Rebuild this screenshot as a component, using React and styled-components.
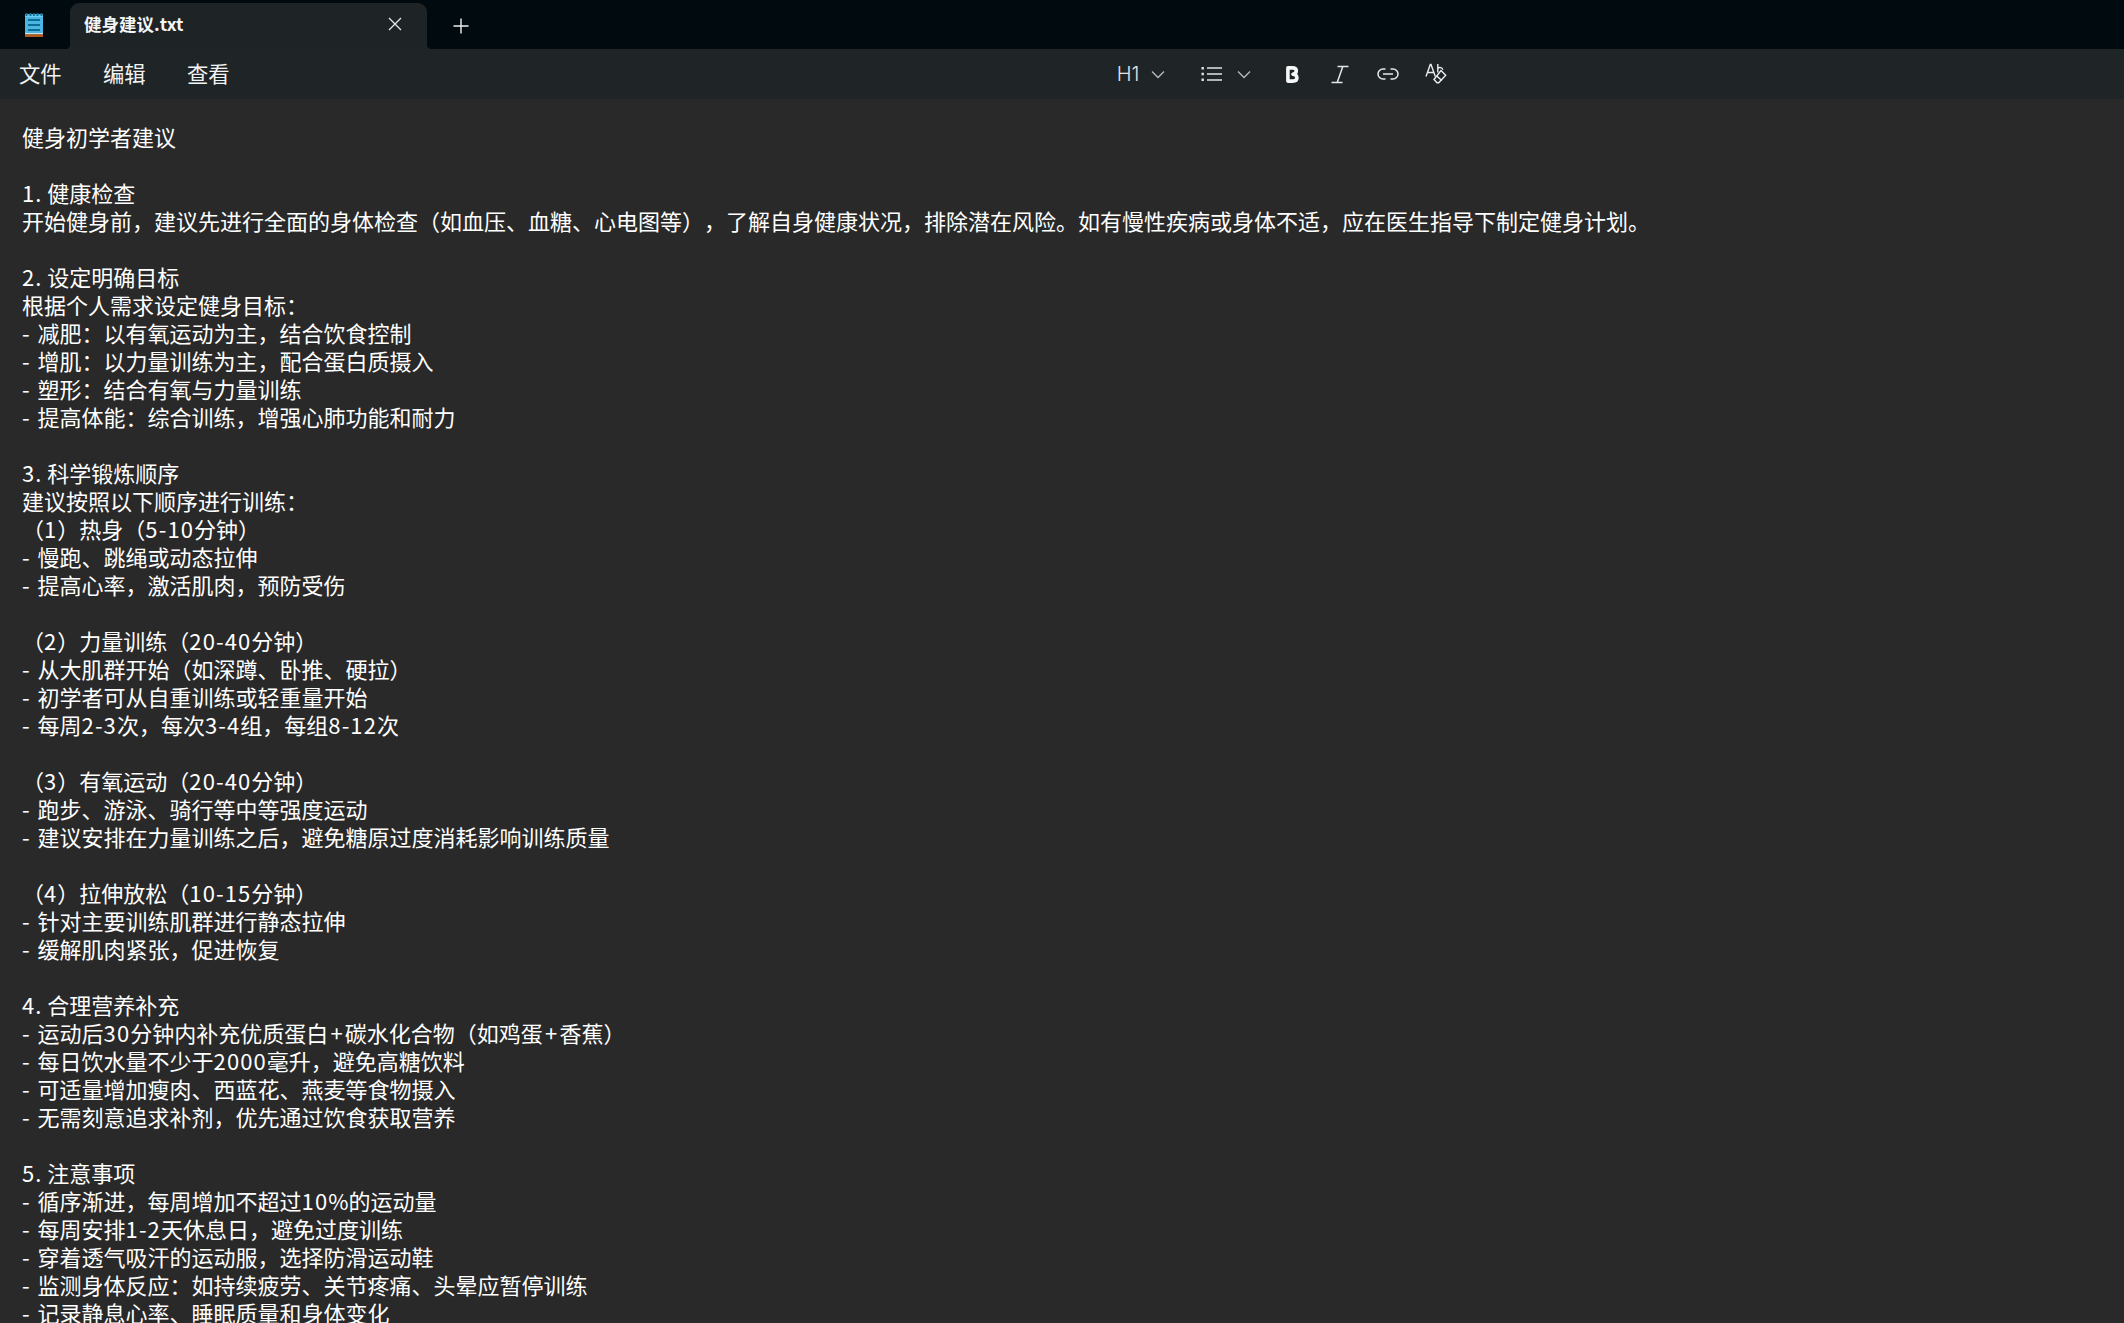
import React from "react";
import styled, { createGlobalStyle } from "styled-components";

const Global = createGlobalStyle`
  html, body { margin: 0; padding: 0; height: 100%; overflow: hidden; background: #292929; }
  #root { height: 100%; }
`;
const Shell = styled.div`
  height: 100vh; display: flex; flex-direction: column; overflow: hidden;
  font-family: "Noto Sans CJK SC", "Noto Sans", sans-serif; color: #fff;
  text-spacing-trim: space-all;
`;
const TitleBar = styled.div`
  height: 49px; flex: none; display: flex; align-items: flex-end; background: #010a0e;
`;
const AppIcon = styled.div`
  width: 70px; height: 49px; display: flex; align-items: center; justify-content: center; padding-right: 2px; box-sizing: border-box;
`;
const Tab = styled.div`
  position: relative; width: 357px; height: 46px; box-sizing: border-box; background: #1e2326; border-radius: 9px 9px 0 0;
  display: flex; align-items: center; justify-content: space-between; padding: 0 25px 5px 14px;
  &::before, &::after {
    content: ""; position: absolute; bottom: 0; width: 5px; height: 5px;
  }
  &::before { left: -5px; background: radial-gradient(circle at 0 0, transparent 5px, #1e2326 5.5px); }
  &::after { right: -5px; background: radial-gradient(circle at 100% 0, transparent 5px, #1e2326 5.5px); }
`;
const TabTitle = styled.span`
  font-size: 17.5px; font-weight: 700; line-height: 24px; color: #f4f5f5;
`;
const NewTab = styled.div`
  width: 68px; height: 49px; display: flex; align-items: center; justify-content: center; padding-top: 3px; box-sizing: border-box;
`;
const MenuBar = styled.div`
  height: 50px; flex: none; display: grid; grid-template-columns: 1080px auto; align-items: center;
  background: #1f2427; box-sizing: border-box; padding-left: 19px;
`;
const Menus = styled.div`display: flex; gap: 41.3px; margin-top: -2px;`;
const MenuItem = styled.span`font-size: 21.33px; line-height: 28px; color: #f2f3f3;`;
const Toolbar = styled.div`display: flex; align-items: center;`;
const Tool = styled.div`
  display: flex; align-items: center; justify-content: center; gap: ${p => p.$gap || 0}px; width: ${p => p.$w}px;
  color: #dfe1e2;
`;
const H1 = styled.span`font-family: "Inter", "Noto Sans", sans-serif; font-size: 20px; font-weight: 300; line-height: 24px; color: #e4e5e6;`;
const Editor = styled.main`
  flex: 1; min-height: 0; overflow: hidden; background: #292929; padding: 23px 0 0 22px;
`;
const Line = styled.div`
  height: 28px; line-height: 28px; font-size: 22px; white-space: pre; color: #fff; word-spacing: 1px;
`;
const Dash = styled.span`letter-spacing: 1px;`;
const Digits = styled.span`letter-spacing: 1.1px;`;
const PlusSign = styled.span`margin: 0 2.2px;`;

const text = `健身初学者建议

1. 健康检查
开始健身前，建议先进行全面的身体检查（如血压、血糖、心电图等），了解自身健康状况，排除潜在风险。如有慢性疾病或身体不适，应在医生指导下制定健身计划。

2. 设定明确目标
根据个人需求设定健身目标：
- 减肥：以有氧运动为主，结合饮食控制
- 增肌：以力量训练为主，配合蛋白质摄入
- 塑形：结合有氧与力量训练
- 提高体能：综合训练，增强心肺功能和耐力

3. 科学锻炼顺序
建议按照以下顺序进行训练：
（1）热身（5-10分钟）
- 慢跑、跳绳或动态拉伸
- 提高心率，激活肌肉，预防受伤

（2）力量训练（20-40分钟）
- 从大肌群开始（如深蹲、卧推、硬拉）
- 初学者可从自重训练或轻重量开始
- 每周2-3次，每次3-4组，每组8-12次

（3）有氧运动（20-40分钟）
- 跑步、游泳、骑行等中等强度运动
- 建议安排在力量训练之后，避免糖原过度消耗影响训练质量

（4）拉伸放松（10-15分钟）
- 针对主要训练肌群进行静态拉伸
- 缓解肌肉紧张，促进恢复

4. 合理营养补充
- 运动后30分钟内补充优质蛋白+碳水化合物（如鸡蛋+香蕉）
- 每日饮水量不少于2000毫升，避免高糖饮料
- 可适量增加瘦肉、西蓝花、燕麦等食物摄入
- 无需刻意追求补剂，优先通过饮食获取营养

5. 注意事项
- 循序渐进，每周增加不超过10%的运动量
- 每周安排1-2天休息日，避免过度训练
- 穿着透气吸汗的运动服，选择防滑运动鞋
- 监测身体反应：如持续疲劳、关节疼痛、头晕应暂停训练
- 记录静息心率、睡眠质量和身体变化`.split("\n");

const NotepadIcon = () => (
  <svg width="20" height="25" viewBox="0 0 20 25">
    <rect x="1" y="2" width="18" height="20.5" fill="#4cb6e2" />
    <path d="M1 3.5h18v1.5H1z" fill="#6ccdf0" />
    <path d="M2.5 1v3M6.5 1v3M10 1v3M13.5 1v3M17.5 1v3" stroke="#136f8e" strokeWidth="1.7" />
    <path d="M1 21.2h18v1.2H1z" fill="#efe9df" />
    <path d="M1 22.4h18V25H1z" fill="#b4581c" />
    <path d="M4 8h12M4 13h12M4 18h12" stroke="#0f6c94" strokeWidth="2" />
  </svg>
);
const CloseIcon = () => (
  <svg width="14" height="14" viewBox="0 0 14 14"><path d="M1 1l12 12M13 1L1 13" stroke="#e6e7e8" strokeWidth="1.3" /></svg>
);
const PlusIcon = () => (
  <svg width="16" height="16" viewBox="0 0 16 16"><path d="M8 .5v15M.5 8h15" stroke="#f0f1f1" strokeWidth="1.4" /></svg>
);
const Chevron = () => (
  <svg width="14" height="9" viewBox="0 0 14 9"><path d="M1 1.5l6 6 6-6" fill="none" stroke="#b9bcbe" strokeWidth="1.3" /></svg>
);
const ListIcon = () => (
  <svg width="22" height="16" viewBox="0 0 22 16">
    <path d="M6 2h15M6 8h15M6 14h15" stroke="#e2e3e4" strokeWidth="1.4" />
    <path d="M0.5 1h2.4v2.4H.5zM.5 6.8h2.4v2.4H.5zM.5 12.6h2.4V15H.5z" fill="#e2e3e4" />
  </svg>
);
const BoldIcon = () => (
  <svg width="15" height="19" viewBox="0 0 15 19">
    <path d="M2.9 2.9h4.4c2.7 0 4 1.1 4 2.9 0 1.7-1.2 3-3.4 3.4 2.6.2 4 1.6 4 3.5 0 2-1.5 3.4-4.3 3.4H2.9z" fill="none" stroke="#f6f7f7" strokeWidth="3.6" strokeLinejoin="round" />
  </svg>
);
const ItalicIcon = () => (
  <svg width="18" height="19" viewBox="0 0 18 19"><path d="M6.5 1.5h11M.5 17.5h11M11.8 1.5L6.2 17.5" fill="none" stroke="#e6e7e8" strokeWidth="1.5" /></svg>
);
const LinkIcon = () => (
  <svg width="22" height="12" viewBox="0 0 22 12">
    <path d="M8.5 1H6a5 5 0 0 0 0 10h2.5M13.5 1H16a5 5 0 0 1 0 10h-2.5M6 6h10" fill="none" stroke="#e8e9ea" strokeWidth="1.5" />
  </svg>
);
const ClearIcon = () => (
  <svg width="22" height="22" viewBox="0 0 22 22">
    <path d="M1 13.5L5.3 1.5h.7L10.3 13.5M2.6 9.5h6.4" fill="none" stroke="#eceded" strokeWidth="1.4" />
    <path d="M12.8 1v8.5" fill="none" stroke="#eceded" strokeWidth="1.4" />
    <path d="M12.9 5.2c1.5-1.2 4.8-.8 4.8 1.5" fill="none" stroke="#eceded" strokeWidth="1.4" />
    <path d="M16 7.5l4.7 4.7-7 7.5h-1.7L9 16.5z" fill="none" stroke="#eceded" strokeWidth="1.4" />
    <path d="M12 13.2l4.8 4.4" stroke="#eceded" strokeWidth="1.4" />
  </svg>
);

const Runs = ({ value }) =>
  value.split(/([0-9][0-9-]*|\+)/).map((part, i) => {
    if (i % 2 === 0) return part;
    return part === "+" ? <PlusSign key={i}>+</PlusSign> : <Digits key={i}>{part}</Digits>;
  });

const EditorLine = ({ value }) =>
  value.startsWith("- ") ? (
    <Line><Dash>- </Dash><Runs value={value.slice(2)} /></Line>
  ) : (
    <Line><Runs value={value} /></Line>
  );

export default function App() {
  return (
    <Shell>
      <Global />
      <TitleBar>
        <AppIcon><NotepadIcon /></AppIcon>
        <Tab>
          <TabTitle>健身建议.txt</TabTitle>
          <CloseIcon />
        </Tab>
        <NewTab><PlusIcon /></NewTab>
      </TitleBar>
      <MenuBar>
        <Menus>
          <MenuItem>文件</MenuItem>
          <MenuItem>编辑</MenuItem>
          <MenuItem>查看</MenuItem>
        </Menus>
        <Toolbar>
          <Tool $w={84} $gap={12}><H1>H1</H1><Chevron /></Tool>
          <Tool $w={85} $gap={14}><ListIcon /><Chevron /></Tool>
          <Tool $w={48}><BoldIcon /></Tool>
          <Tool $w={48}><ItalicIcon /></Tool>
          <Tool $w={48}><LinkIcon /></Tool>
          <Tool $w={48}><ClearIcon /></Tool>
        </Toolbar>
      </MenuBar>
      <Editor>
        {text.map((l, i) => <EditorLine key={i} value={l} />)}
      </Editor>
    </Shell>
  );
}
